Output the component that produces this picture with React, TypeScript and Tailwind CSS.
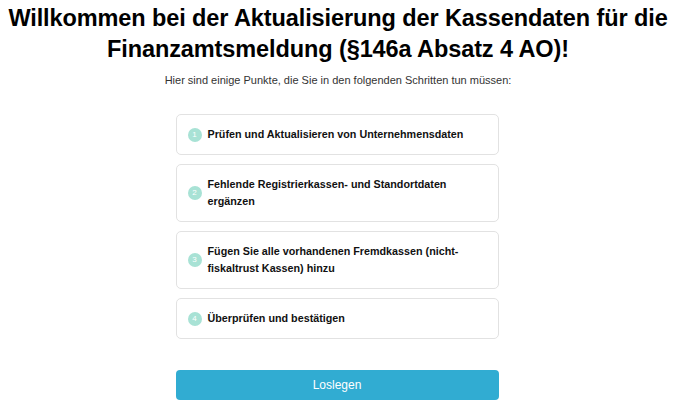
import { Fragment } from 'react'

const steps = [
  'Prüfen und Aktualisieren von Unternehmensdaten',
  'Fehlende Registrierkassen- und Standortdaten ergänzen',
  'Fügen Sie alle vorhandenen Fremdkassen (nicht-fiskaltrust Kassen) hinzu',
  'Überprüfen und bestätigen',
]

export default function App() {
  return (
    <div className="min-h-screen bg-white font-['Liberation_Sans',Arial,sans-serif] text-black">
      <div className="flex flex-col items-center pt-[3px]">
        {/* Header */}
        <h1 className="text-center text-[23.5px] font-bold leading-[31px] tracking-[-0.1px]">
          Willkommen bei der Aktualisierung der Kassendaten für die
          <br />
          Finanzamtsmeldung (§146a Absatz 4 AO)!
        </h1>
        <p className="mt-[8px] text-[11px] leading-[14px] text-[#333]">
          Hier sind einige Punkte, die Sie in den folgenden Schritten tun müssen:
        </p>

        {/* Steps */}
        <div className="mt-[27px] flex w-[323px] -translate-x-[1px] flex-col gap-[9px]">
          {steps.map((step, i) => (
            <Fragment key={i}>
              <div className="flex items-center gap-[6px] rounded-[5px] border border-[#e2e2e2] bg-white px-[11px] py-[11px]">
                <span className="flex h-[14px] w-[14px] shrink-0 items-center justify-center rounded-full bg-[#a8e2d5] text-[8px] text-white">
                  {i + 1}
                </span>
                <span className="text-[10.75px] font-bold leading-[17px] text-[#111]">{step}</span>
              </div>
            </Fragment>
          ))}
        </div>

        <button className="mt-[31px] h-[30px] w-[323px] -translate-x-[1px] rounded-[4px] bg-[#31acd2] text-[12px] text-white">
          Loslegen
        </button>
      </div>
    </div>
  )
}
